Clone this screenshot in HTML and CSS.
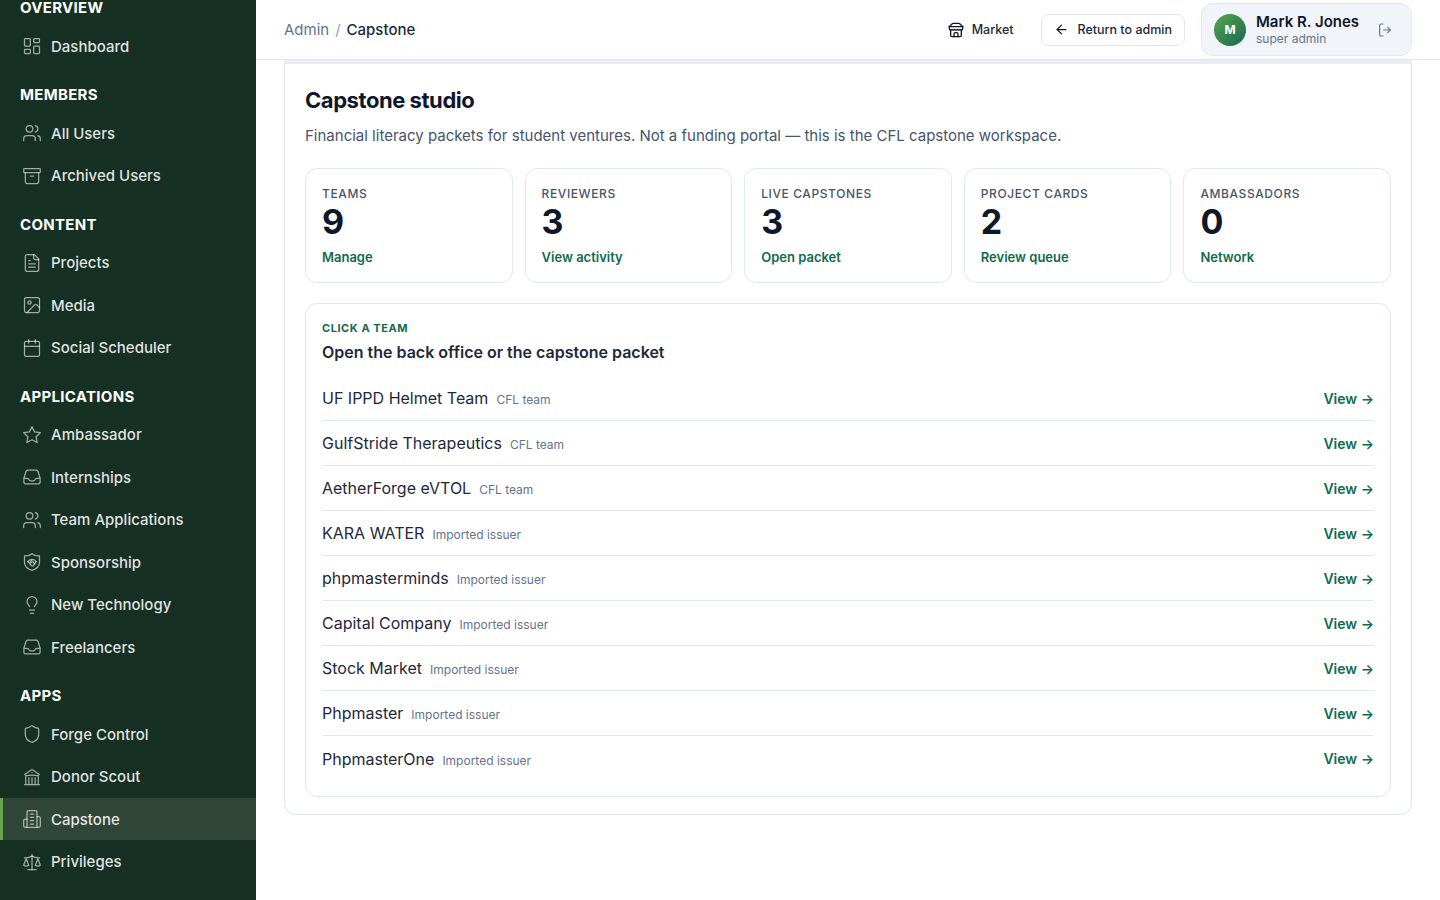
FILE: index.html
```html
<!DOCTYPE html>
<html lang="en">

<head>
  <meta charset="UTF-8" />
  <meta name="viewport" content="width=device-width, initial-scale=1.0" />
  <title>Capstone</title>
  <link rel="stylesheet" href="styles.css">
</head>

<body>
  <aside class="sidebar">
    <nav class="side-nav">
      <div class="side-group">
        <h4>Overview</h4>
        <a class="side-link" href="#"><svg class="icon" viewBox="0 0 24 24"><rect x="3" y="3" width="7" height="9" rx="1"/><rect x="14" y="3" width="7" height="5" rx="1"/><rect x="14" y="12" width="7" height="9" rx="1"/><rect x="3" y="16" width="7" height="5" rx="1"/></svg>Dashboard</a>
      </div>
      <div class="side-group">
        <h4>Members</h4>
        <a class="side-link" href="#"><svg class="icon" viewBox="0 0 24 24"><path d="M16 21v-2a4 4 0 0 0-4-4H6a4 4 0 0 0-4 4v2"/><circle cx="9" cy="7" r="4"/><path d="M22 21v-2a4 4 0 0 0-3-3.87"/><path d="M16 3.13a4 4 0 0 1 0 7.75"/></svg>All Users</a>
        <a class="side-link" href="#"><svg class="icon" viewBox="0 0 24 24"><rect x="2" y="3" width="20" height="5" rx="1"/><path d="M4 8v11a2 2 0 0 0 2 2h12a2 2 0 0 0 2-2V8"/><path d="M10 12h4"/></svg>Archived Users</a>
      </div>
      <div class="side-group">
        <h4>Content</h4>
        <a class="side-link" href="#"><svg class="icon" viewBox="0 0 24 24"><path d="M15 2H6a2 2 0 0 0-2 2v16a2 2 0 0 0 2 2h12a2 2 0 0 0 2-2V7Z"/><path d="M14 2v4a2 2 0 0 0 2 2h4"/><path d="M10 9H8"/><path d="M16 13H8"/><path d="M16 17H8"/></svg>Projects</a>
        <a class="side-link" href="#"><svg class="icon" viewBox="0 0 24 24"><rect x="3" y="3" width="18" height="18" rx="2"/><circle cx="9" cy="9" r="2"/><path d="m21 15-3.086-3.086a2 2 0 0 0-2.828 0L6 21"/></svg>Media</a>
        <a class="side-link" href="#"><svg class="icon" viewBox="0 0 24 24"><path d="M8 2v4"/><path d="M16 2v4"/><rect x="3" y="4" width="18" height="18" rx="2"/><path d="M3 10h18"/></svg>Social Scheduler</a>
      </div>
      <div class="side-group">
        <h4>Applications</h4>
        <a class="side-link" href="#"><svg class="icon" viewBox="0 0 24 24"><polygon points="12 2 15.09 8.26 22 9.27 17 14.14 18.18 21.02 12 17.77 5.82 21.02 7 14.14 2 9.27 8.91 8.26"/></svg>Ambassador</a>
        <a class="side-link" href="#"><svg class="icon" viewBox="0 0 24 24"><path d="M2.25 13.5h3.86a2.25 2.25 0 0 1 2.012 1.244l.256.512a2.25 2.25 0 0 0 2.013 1.244h3.218a2.25 2.25 0 0 0 2.013-1.244l.256-.512a2.25 2.25 0 0 1 2.013-1.244h3.859m-19.5.338V18a2.25 2.25 0 0 0 2.25 2.25h15A2.25 2.25 0 0 0 21.75 18v-4.162c0-.224-.034-.447-.1-.661L19.24 5.338a2.25 2.25 0 0 0-2.15-1.588H6.911a2.25 2.25 0 0 0-2.15 1.588L2.35 13.177a2.25 2.25 0 0 0-.1.661Z"/></svg>Internships</a>
        <a class="side-link" href="#"><svg class="icon" viewBox="0 0 24 24"><path d="M16 21v-2a4 4 0 0 0-4-4H6a4 4 0 0 0-4 4v2"/><circle cx="9" cy="7" r="4"/><path d="M22 21v-2a4 4 0 0 0-3-3.87"/><path d="M16 3.13a4 4 0 0 1 0 7.75"/></svg>Team Applications</a>
        <a class="side-link" href="#"><svg class="icon" viewBox="0 0 24 24"><path d="M21 4.5v8c0 5-4 7.8-9 9.5-5-1.700-9-4.500-9-9.500v-8c3 .3 6.500-.4 9-2.500 2.500 2.100 6 2.800 9 2.500Z"/><path d="m7 11.500 3-2.500 2 .5 2-.5 3 2.500"/><path d="m7 11.500 4.500 5 1.500.5 4-5.500"/><path d="m12 9.500-2.500 3c.8.7 1.800.5 2.500-.5l1-.5 2.500 3"/></svg>Sponsorship</a>
        <a class="side-link" href="#"><svg class="icon" viewBox="0 0 24 24"><path d="M15 14c.2-1 .7-1.700 1.500-2.500 1-.9 1.500-2.200 1.500-3.500A6 6 0 0 0 6 8c0 1 .2 2.200 1.500 3.500.7.7 1.300 1.500 1.500 2.500"/><path d="M9 18h6"/><path d="M10 22h4"/></svg>New Technology</a>
        <a class="side-link" href="#"><svg class="icon" viewBox="0 0 24 24"><path d="M2.25 13.5h3.86a2.25 2.25 0 0 1 2.012 1.244l.256.512a2.25 2.25 0 0 0 2.013 1.244h3.218a2.25 2.25 0 0 0 2.013-1.244l.256-.512a2.25 2.25 0 0 1 2.013-1.244h3.859m-19.5.338V18a2.25 2.25 0 0 0 2.25 2.25h15A2.25 2.25 0 0 0 21.75 18v-4.162c0-.224-.034-.447-.1-.661L19.24 5.338a2.25 2.25 0 0 0-2.15-1.588H6.911a2.25 2.25 0 0 0-2.15 1.588L2.35 13.177a2.25 2.25 0 0 0-.1.661Z"/></svg>Freelancers</a>
      </div>
      <div class="side-group">
        <h4>Apps</h4>
        <a class="side-link" href="#"><svg class="icon" viewBox="0 0 24 24"><path d="M20 13c0 5-3.500 7.500-7.660 8.950a1 1 0 0 1-.67-.01C7.500 20.500 4 18 4 13V6a1 1 0 0 1 1-1c2 0 4.500-1.200 6.240-2.720a1.170 1.170 0 0 1 1.520 0C14.510 3.810 17 5 19 5a1 1 0 0 1 1 1z"/></svg>Forge Control</a>
        <a class="side-link" href="#"><svg class="icon" viewBox="0 0 24 24"><path d="M12 21v-8.250M15.750 21v-8.250M8.250 21v-8.250M3 9l9-6 9 6m-1.500 12V10.332A48.360 48.360 0 0 0 12 9.750c-2.551 0-5.056.2-7.500.582V21M3 21h18M12 6.750h.008v.008H12V6.750Z"/></svg>Donor Scout</a>
        <a class="side-link active" href="#"><svg class="icon" viewBox="0 0 24 24"><path d="M6 22V4a2 2 0 0 1 2-2h8a2 2 0 0 1 2 2v18Z"/><path d="M6 12H4a2 2 0 0 0-2 2v6a2 2 0 0 0 2 2h2"/><path d="M18 9h2a2 2 0 0 1 2 2v9a2 2 0 0 1-2 2h-2"/><path d="M10 6h4"/><path d="M10 10h4"/><path d="M10 14h4"/><path d="M10 18h4"/></svg>Capstone</a>
        <a class="side-link" href="#"><svg class="icon" viewBox="0 0 24 24"><path d="m16 16 3-8 3 8c-.87.65-1.920 1-3 1s-2.130-.35-3-1Z"/><path d="m2 16 3-8 3 8c-.87.65-1.920 1-3 1s-2.130-.35-3-1Z"/><path d="M7 21h10"/><path d="M12 3v18"/><path d="M3 7h2c2 0 5-1 7-2 2 1 5 2 7 2h2"/></svg>Privileges</a>
      </div>
    </nav>
  </aside>

  <div class="main">
    <header class="topbar">
      <div class="crumbs">
        <span class="crumb-root">Admin</span>
        <span class="crumb-sep">/</span>
        <span class="crumb-current">Capstone</span>
      </div>
      <div class="top-actions">
        <a class="market-link" href="#"><svg class="icon-dark" viewBox="0 0 24 24"><path d="m2 7 4.410-4.410A2 2 0 0 1 7.830 2h8.340a2 2 0 0 1 1.420.59L22 7"/><path d="M4 12v8a2 2 0 0 0 2 2h12a2 2 0 0 0 2-2v-8"/><path d="M15 22v-4a2 2 0 0 0-2-2h-2a2 2 0 0 0-2 2v4"/><path d="M2 7h20"/><path d="M22 7v3a2 2 0 0 1-2 2 2.700 2.700 0 0 1-2-.8 2.700 2.700 0 0 1-2 .8 2.700 2.700 0 0 1-2-.8 2.700 2.700 0 0 1-2 .8 2.700 2.700 0 0 1-2-.8 2.700 2.700 0 0 1-2 .8 2.700 2.700 0 0 1-2-.8 2.700 2.700 0 0 1-2 .8 2 2 0 0 1-2-2V7"/></svg>Market</a>
        <a class="return-btn" href="#"><svg class="icon-arrow" viewBox="0 0 24 24"><path d="M19 12H5"/><path d="m12 19-7-7 7-7"/></svg>Return to admin</a>
        <div class="user-chip">
          <div class="avatar">M</div>
          <div class="user-text">
            <div class="user-name">Mark R. Jones</div>
            <div class="user-role">super admin</div>
          </div>
          <svg class="icon-logout" viewBox="0 0 24 24"><path d="M9 21H6a2 2 0 0 1-2-2V5a2 2 0 0 1 2-2h3"/><path d="m16 16 4-4-4-4"/><path d="M20 12H10"/></svg>
        </div>
      </div>
    </header>

    <main class="content">
      <section class="studio">
        <h1>Capstone studio</h1>
        <p class="lead">Financial literacy packets for student ventures. Not a funding portal — this is the CFL capstone workspace.</p>

        <div class="stats">
          <div class="stat"><div class="stat-label">Teams</div><div class="stat-value">9</div><a class="stat-link" href="#">Manage</a></div>
          <div class="stat"><div class="stat-label">Reviewers</div><div class="stat-value">3</div><a class="stat-link" href="#">View activity</a></div>
          <div class="stat"><div class="stat-label">Live capstones</div><div class="stat-value">3</div><a class="stat-link" href="#">Open packet</a></div>
          <div class="stat"><div class="stat-label">Project cards</div><div class="stat-value">2</div><a class="stat-link" href="#">Review queue</a></div>
          <div class="stat"><div class="stat-label">Ambassadors</div><div class="stat-value">0</div><a class="stat-link" href="#">Network</a></div>
        </div>

        <div class="teams">
          <div class="eyebrow">Click a team</div>
          <h2>Open the back office or the capstone packet</h2>
          <div class="team-row"><div><span class="team-name">UF IPPD Helmet Team</span><span class="team-meta">CFL team</span></div><a class="team-view" href="#">View →</a></div>
          <div class="team-row"><div><span class="team-name">GulfStride Therapeutics</span><span class="team-meta">CFL team</span></div><a class="team-view" href="#">View →</a></div>
          <div class="team-row"><div><span class="team-name">AetherForge eVTOL</span><span class="team-meta">CFL team</span></div><a class="team-view" href="#">View →</a></div>
          <div class="team-row"><div><span class="team-name">KARA WATER</span><span class="team-meta">Imported issuer</span></div><a class="team-view" href="#">View →</a></div>
          <div class="team-row"><div><span class="team-name">phpmasterminds</span><span class="team-meta">Imported issuer</span></div><a class="team-view" href="#">View →</a></div>
          <div class="team-row"><div><span class="team-name">Capital Company</span><span class="team-meta">Imported issuer</span></div><a class="team-view" href="#">View →</a></div>
          <div class="team-row"><div><span class="team-name">Stock Market</span><span class="team-meta">Imported issuer</span></div><a class="team-view" href="#">View →</a></div>
          <div class="team-row"><div><span class="team-name">Phpmaster</span><span class="team-meta">Imported issuer</span></div><a class="team-view" href="#">View →</a></div>
          <div class="team-row"><div><span class="team-name">PhpmasterOne</span><span class="team-meta">Imported issuer</span></div><a class="team-view" href="#">View →</a></div>
        </div>
      </section>
    </main>
  </div>
</body>

</html>
```

FILE: styles.css
```css
* {
  box-sizing: border-box;
}

html,
body {
  height: 100%;
}

body {
  margin: 0;
  display: flex;
  overflow: hidden;
  font-family: Inter, "Liberation Sans", sans-serif;
  background: #fff;
  color: #0f172a;
}

a {
  text-decoration: none;
  color: inherit;
}

/* sidebar */
.sidebar {
  width: 256px;
  flex-shrink: 0;
  height: 100vh;
  overflow: hidden;
  background: #173024;
}

.side-nav {
  margin-top: -1px;
}

.side-group {
  margin-bottom: 18.75px;
}

.side-group h4 {
  margin: 0 0 7.75px;
  padding: 0 20px;
  height: 18px;
  line-height: 18px;
  font-size: 15px;
  font-weight: 700;
  letter-spacing: 0.02em;
  text-transform: uppercase;
  color: #fff;
}

.side-link {
  display: flex;
  align-items: center;
  gap: 9px;
  height: 42.5px;
  padding: 0 22px;
  font-size: 15px;
  font-weight: 500;
  color: rgba(255, 255, 255, 0.88);
  border-left: 0 solid transparent;
}

.side-link.active {
  padding-left: 19px;
  background: #2f4638;
  border-left: 3px solid #6aa84f;
}

.icon {
  width: 20px;
  height: 20px;
  flex-shrink: 0;
  fill: none;
  stroke: rgba(255, 255, 255, 0.6);
  stroke-width: 1.5;
  stroke-linecap: round;
  stroke-linejoin: round;
}

/* top bar */
.main {
  flex: 1;
  min-width: 0;
}

.topbar {
  display: flex;
  justify-content: space-between;
  align-items: center;
  height: 60px;
  padding: 0 28px;
  background: #fff;
  border-bottom: 1px solid #e2e8f0;
}

.crumbs {
  display: flex;
  align-items: center;
  gap: 6px;
  font-size: 15px;
}

.crumb-root {
  color: #64748b;
}

.crumb-sep {
  color: #94a3b8;
}

.crumb-current {
  color: #1e293b;
  font-weight: 500;
}

.top-actions {
  display: flex;
  align-items: center;
}

.market-link {
  display: flex;
  align-items: center;
  gap: 8px;
  margin-right: 28px;
  font-size: 12.5px;
  font-weight: 500;
  color: #1e293b;
}

.icon-dark,
.icon-arrow,
.icon-logout {
  fill: none;
  stroke-width: 2;
  stroke-linecap: round;
  stroke-linejoin: round;
}

.icon-dark {
  width: 16px;
  height: 16px;
  stroke: #0f172a;
}

.icon-arrow {
  width: 15px;
  height: 15px;
  stroke: #0f172a;
}

.return-btn {
  display: flex;
  align-items: center;
  gap: 8px;
  height: 32px;
  padding: 0 12px;
  margin-right: 16px;
  border: 1px solid #e2e8f0;
  border-radius: 8px;
  font-size: 12.5px;
  font-weight: 500;
  color: #1e293b;
}

.user-chip {
  display: flex;
  align-items: center;
  width: 211px;
  height: 53px;
  padding: 0 12px;
  background: #f1f5f9;
  border: 1px solid #e2e8f0;
  border-radius: 12px;
}

.avatar {
  display: flex;
  align-items: center;
  justify-content: center;
  width: 32px;
  height: 32px;
  margin-right: 10px;
  border-radius: 50%;
  background: linear-gradient(135deg, #5aa14f, #166b50);
  color: #fff;
  font-size: 12px;
  font-weight: 700;
}

.user-text {
  flex: 1;
}

.user-name {
  font-size: 15px;
  font-weight: 600;
  line-height: 19px;
  color: #0f172a;
}

.user-role {
  font-size: 12px;
  line-height: 16px;
  color: #64748b;
}

.icon-logout {
  width: 16px;
  height: 16px;
  margin-right: 6px;
  stroke: #64748b;
  stroke-width: 1.75;
}

/* page */
.content {
  padding: 0 28px;
}

.studio {
  height: 755px;
  padding: 20px;
  border: 1px solid #e2e8f0;
  border-top: 4px solid #e9eef6;
  border-radius: 0 0 12px 12px;
}

.studio h1 {
  margin: 0;
  font-size: 22px;
  line-height: 32px;
  font-weight: 700;
  letter-spacing: -0.02em;
  color: #0f172a;
}

.lead {
  margin: 8px 0 0;
  font-size: 15px;
  line-height: 24px;
  color: #475569;
}

.stats {
  display: grid;
  grid-template-columns: repeat(5, 1fr);
  gap: 12px;
  margin-top: 20px;
}

.stat {
  height: 115px;
  padding: 16px;
  border: 1px solid #e2e8f0;
  border-radius: 12px;
}

.stat-label {
  font-size: 12px;
  line-height: 18px;
  font-weight: 500;
  letter-spacing: 0.05em;
  text-transform: uppercase;
  color: #475569;
}

.stat-value {
  font-size: 34px;
  line-height: 38px;
  font-weight: 700;
  color: #0f172a;
}

.stat-link {
  display: block;
  margin-top: 6px;
  font-size: 13px;
  line-height: 20px;
  font-weight: 600;
  color: #0f6b4f;
}

.teams {
  margin-top: 20px;
  padding: 16px 16px 15px;
  border: 1px solid #e2e8f0;
  border-radius: 12px;
}

.eyebrow {
  font-size: 11px;
  line-height: 16px;
  font-weight: 700;
  letter-spacing: 0.05em;
  text-transform: uppercase;
  color: #0f6b4f;
}

.teams h2 {
  margin: 4px 0 12px;
  font-size: 16px;
  line-height: 24px;
  font-weight: 600;
  color: #1e293b;
}

.team-row {
  display: flex;
  justify-content: space-between;
  align-items: center;
  height: 45px;
  border-bottom: 1px solid #e2e8f0;
}

.team-row:last-child {
  border-bottom: none;
}

.team-name {
  font-size: 16px;
  color: #1e293b;
}

.team-meta {
  margin-left: 8px;
  font-size: 12px;
  color: #64748b;
}

.team-view {
  font-size: 14px;
  font-weight: 600;
  color: #0f6b4f;
}
```
